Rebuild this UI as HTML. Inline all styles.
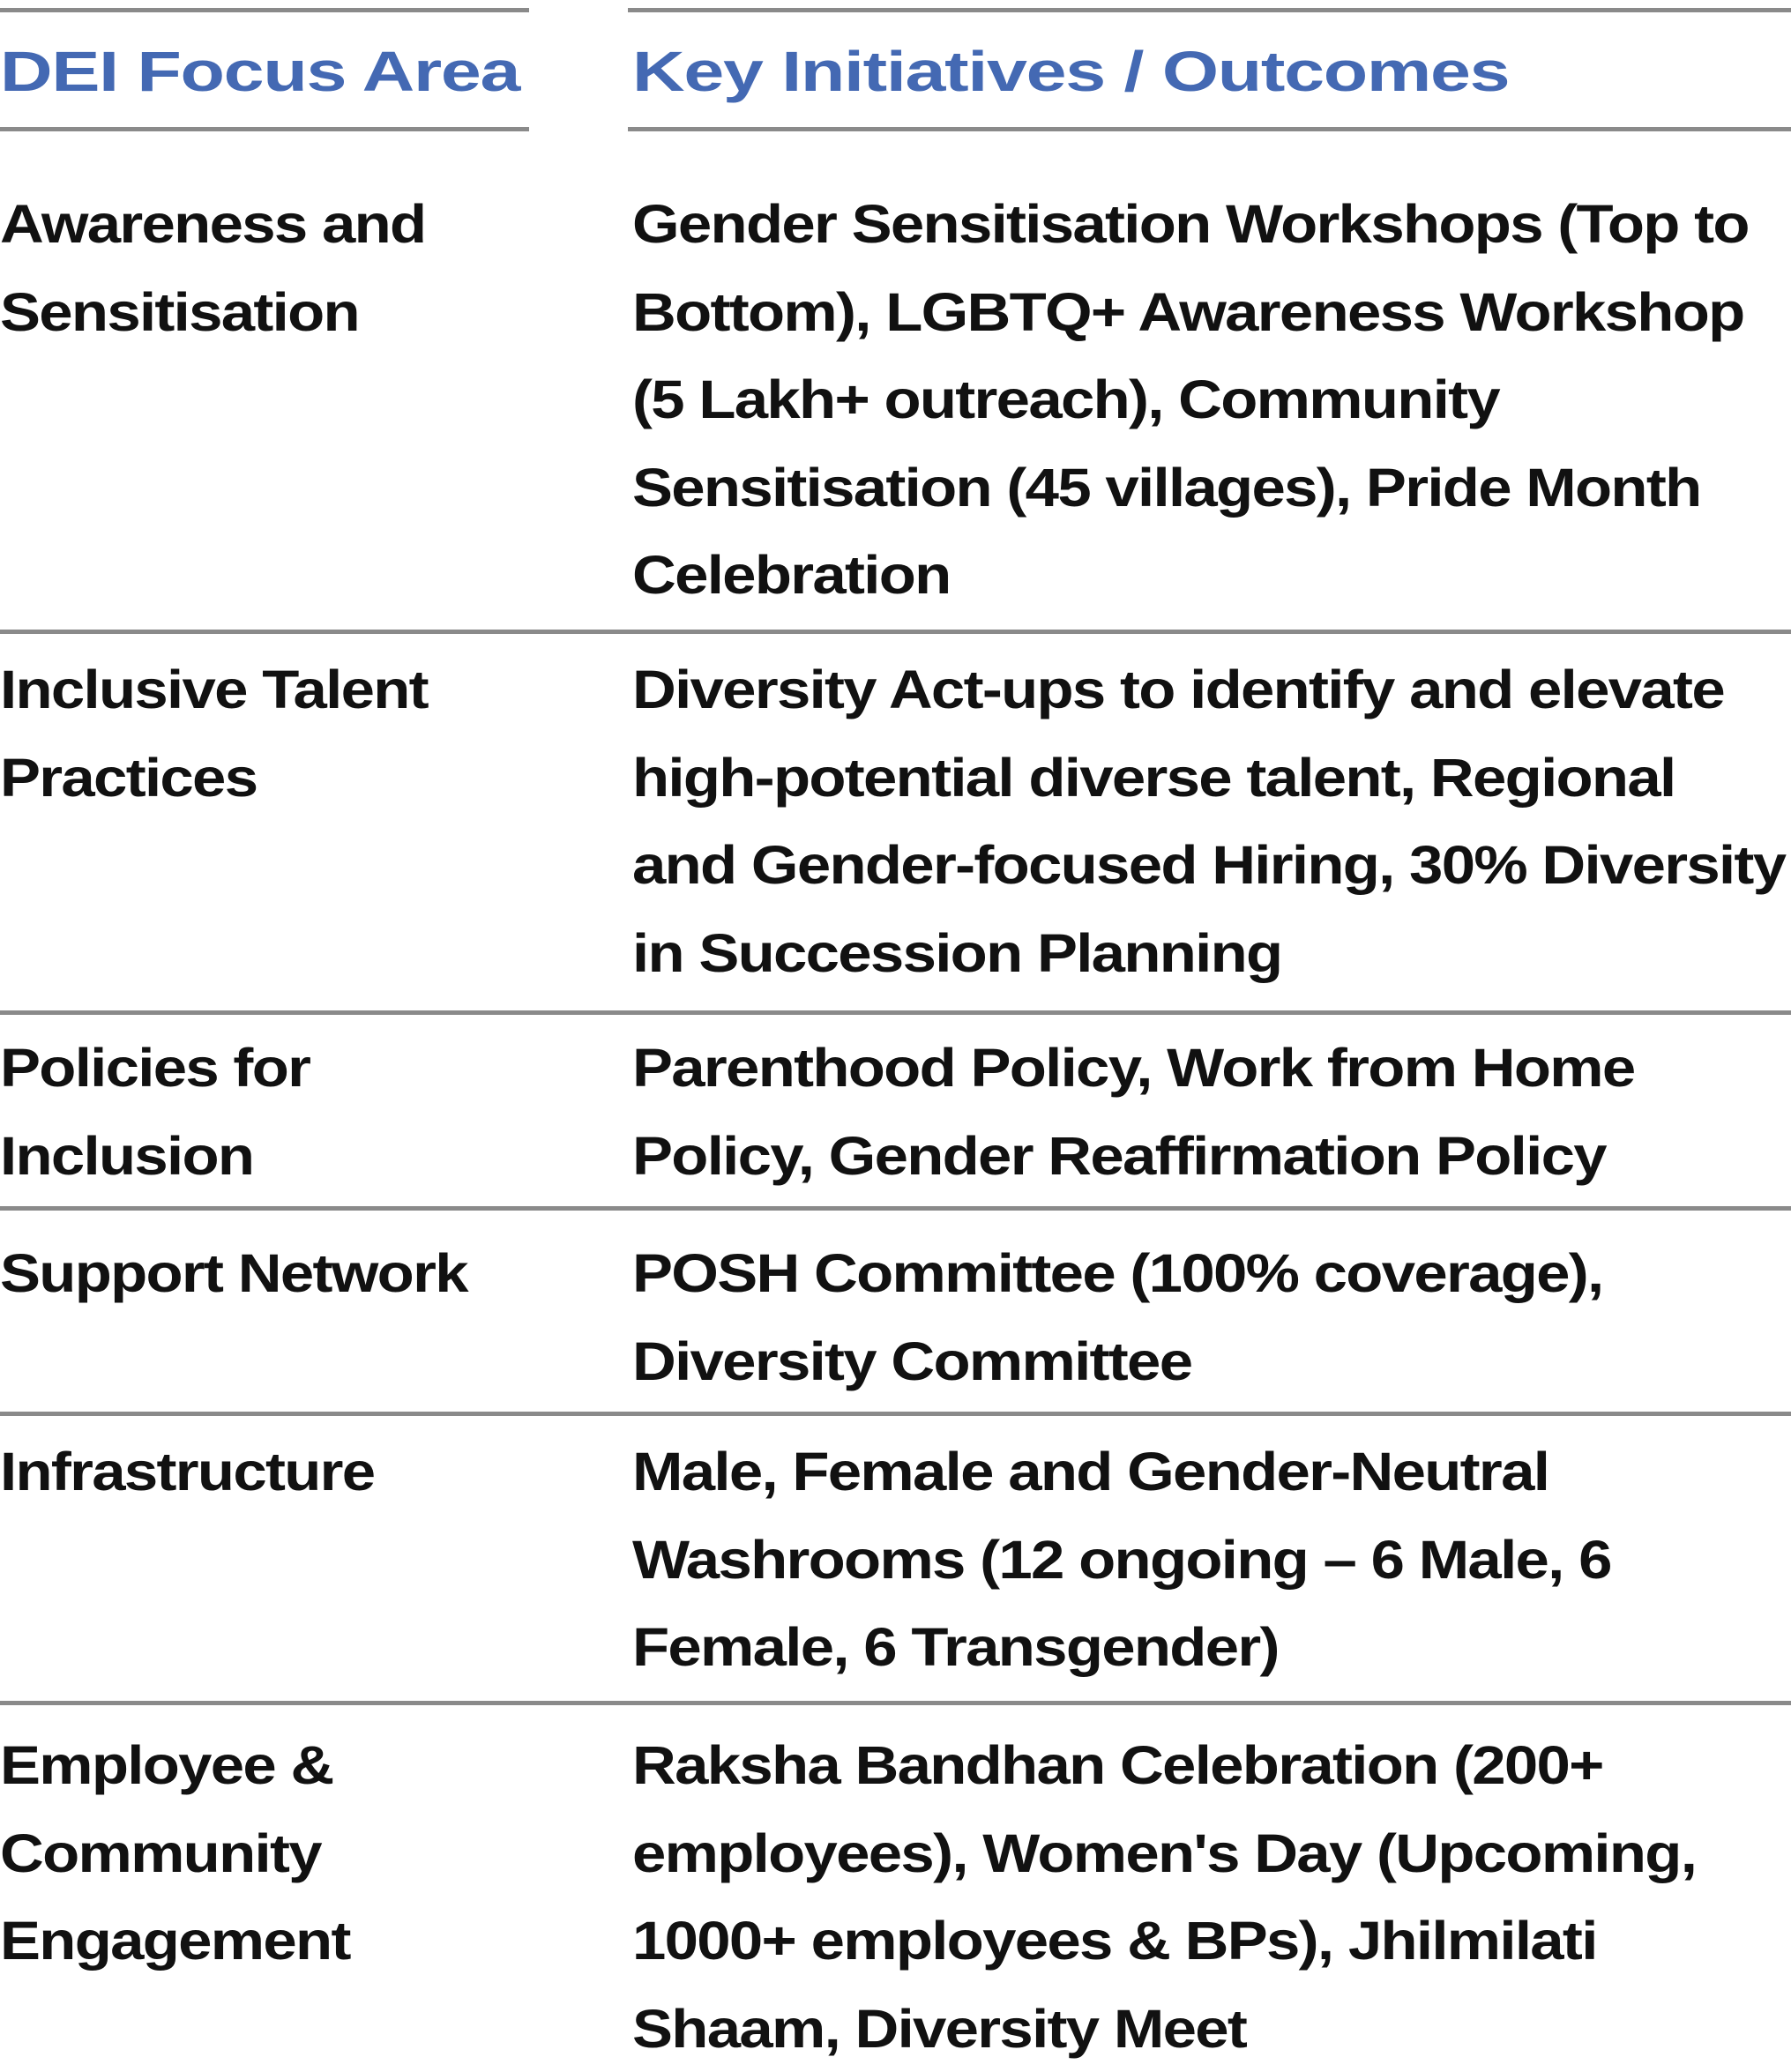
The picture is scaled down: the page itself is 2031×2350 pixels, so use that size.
<!DOCTYPE html>
<html><head><meta charset="utf-8"><style>
html,body{margin:0;padding:0;background:#fff;width:2031px;height:2350px;overflow:hidden;position:relative;font-family:"Liberation Sans",sans-serif;}
.l{position:absolute;background:#8a8a8a;height:5px;}
.t{position:absolute;font-weight:bold;font-size:61px;line-height:99.5px;letter-spacing:-1.5px;color:#111;white-space:nowrap;transform:scaleX(1.13);transform-origin:0 0;}
.h{color:#4469b3;font-size:64px;letter-spacing:-1px;transform:scaleX(1.29);}
</style></head><body>
<div class="l" style="left:0;width:600px;top:9px"></div>
<div class="l" style="left:712px;width:1319px;top:9px"></div>
<div class="l" style="left:0;width:600px;top:144px"></div>
<div class="l" style="left:712px;width:1319px;top:144px"></div>
<div class="t h" style="left:0;top:32px">DEI Focus Area</div>
<div class="t h" style="left:717px;top:32px">Key Initiatives / Outcomes</div>

<div class="l" style="left:0;width:2031px;top:714px"></div>
<div class="l" style="left:0;width:2031px;top:1146px"></div>
<div class="l" style="left:0;width:2031px;top:1368px"></div>
<div class="l" style="left:0;width:2031px;top:1601px"></div>
<div class="l" style="left:0;width:2031px;top:1929px"></div>

<div class="t" style="left:0;top:205px">Awareness and<br>Sensitisation</div>
<div class="t" style="left:717px;top:205px">Gender Sensitisation Workshops (Top to<br>Bottom), LGBTQ+ Awareness Workshop<br>(5 Lakh+ outreach), Community<br>Sensitisation (45 villages), Pride Month<br>Celebration</div>

<div class="t" style="left:0;top:733px">Inclusive Talent<br>Practices</div>
<div class="t" style="left:717px;top:733px">Diversity Act-ups to identify and elevate<br>high-potential diverse talent, Regional<br>and Gender-focused Hiring, 30% Diversity<br>in Succession Planning</div>

<div class="t" style="left:0;top:1162px">Policies for<br>Inclusion</div>
<div class="t" style="left:717px;top:1162px">Parenthood Policy, Work from Home<br>Policy, Gender Reaffirmation Policy</div>

<div class="t" style="left:0;top:1395px">Support Network</div>
<div class="t" style="left:717px;top:1395px">POSH Committee (100% coverage),<br>Diversity Committee</div>

<div class="t" style="left:0;top:1620px">Infrastructure</div>
<div class="t" style="left:717px;top:1620px">Male, Female and Gender-Neutral<br>Washrooms (12 ongoing – 6 Male, 6<br>Female, 6 Transgender)</div>

<div class="t" style="left:0;top:1953px">Employee &amp;<br>Community<br>Engagement</div>
<div class="t" style="left:717px;top:1953px">Raksha Bandhan Celebration (200+<br>employees), Women's Day (Upcoming,<br>1000+ employees &amp; BPs), Jhilmilati<br>Shaam, Diversity Meet</div>
</body></html>
